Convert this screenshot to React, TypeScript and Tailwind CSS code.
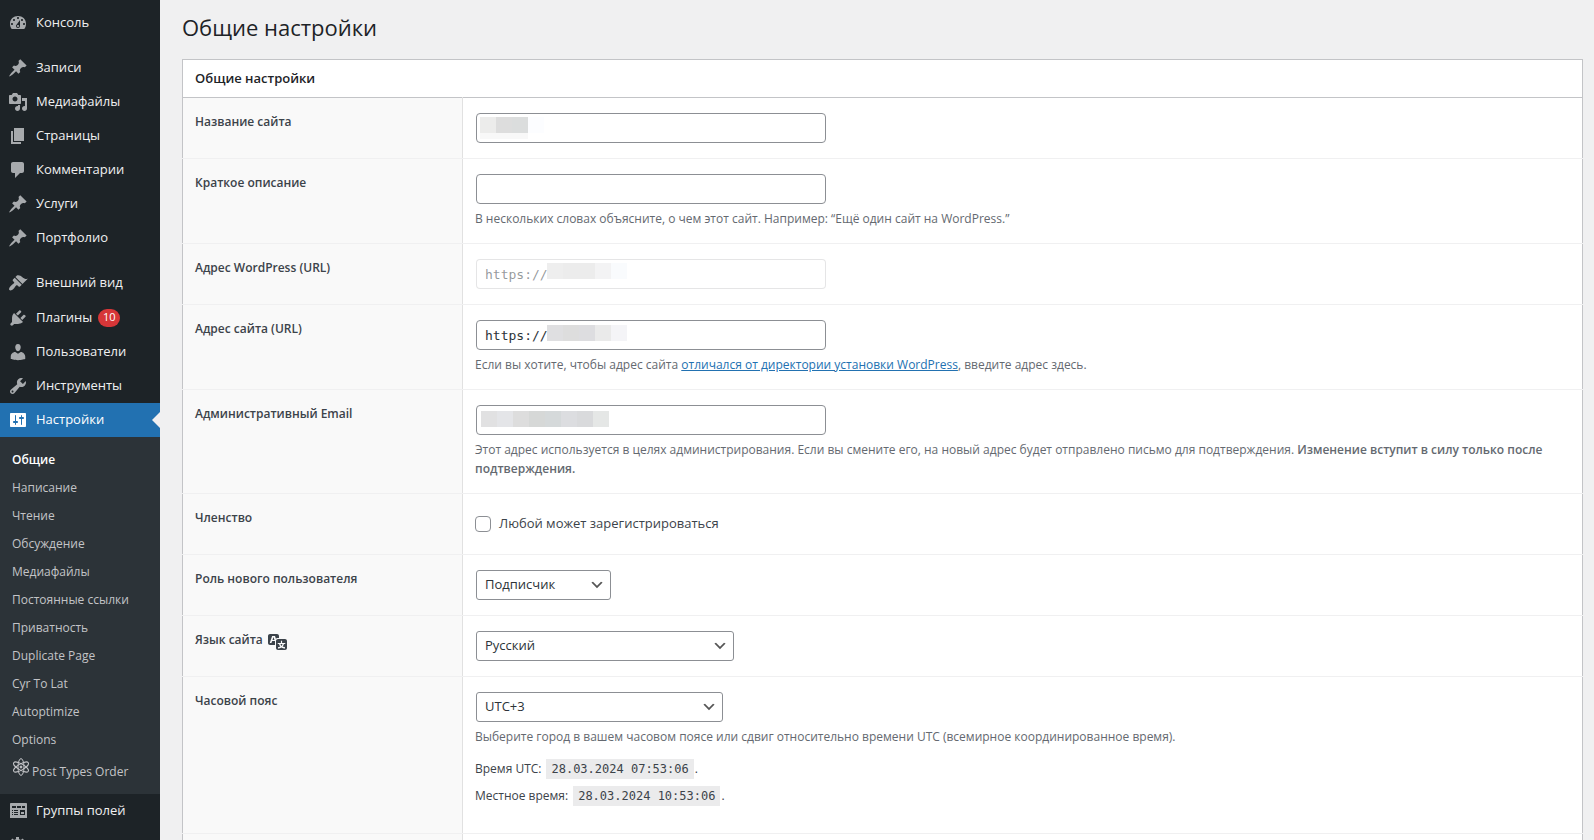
import { useState, type ReactNode } from 'react'

interface MenuItem {
  id: string
  label: string
  path: string
  badge?: number
}

interface SelectFieldProps {
  id: string
  options: string[]
  className: string
}

interface MosaicProps {
  colors: string[]
  className: string
}

const PIN =
  'M10.44 3.02l1.82-1.82 6.36 6.35-1.83 1.82c-1.05-.68-2.48-.57-3.41.36l-.75.75c-.92.93-1.04 2.35-.35 3.41l-1.83 1.82-2.41-2.41-2.8 2.79c-.42.42-3.38 2.71-3.8 2.29s1.86-3.39 2.28-3.81l2.79-2.79L4.1 9.36l1.83-1.82c1.05.69 2.48.57 3.4-.36l.75-.75c.93-.92 1.05-2.35.36-3.41z'
const DASHBOARD =
  'M3.76 16h12.48c1.11-1.41 1.76-3.18 1.76-5.11 0-4.97-3.58-7.89-8-7.89S2 5.92 2 10.89c0 1.93.65 3.7 1.76 5.11zM10 4c.55 0 1 .45 1 1s-.45 1-1 1-1-.45-1-1 .45-1 1-1zM6 6c.55 0 1 .45 1 1s-.45 1-1 1-1-.45-1-1 .45-1 1-1zm8 0c.55 0 1 .45 1 1s-.45 1-1 1-1-.45-1-1 .45-1 1-1zM12 7v6a2 2 0 0 1-4 0c0-.7.35-1.3.9-1.65zM4 10c.55 0 1 .45 1 1s-.45 1-1 1-1-.45-1-1 .45-1 1-1zm12 0c.55 0 1 .45 1 1s-.45 1-1 1-1-.45-1-1 .45-1 1-1zm-5 3c0-.55-.45-1-1-1s-1 .45-1 1 .45 1 1 1 1-.45 1-1z'
const MEDIA =
  'M13 11V4c0-.55-.45-1-1-1h-1.67L9 1H5L3.67 3H2c-.55 0-1 .45-1 1v7c0 .55.45 1 1 1h10c.55 0 1-.45 1-1zM7 4.5c1.38 0 2.5 1.12 2.5 2.5S8.38 9.5 7 9.5 4.5 8.38 4.5 7 5.62 4.5 7 4.5zM14 6h5v10.5c0 1.38-1.12 2.5-2.5 2.5S14 17.88 14 16.5s1.12-2.5 2.5-2.5c.17 0 .34.02.5.05V9h-3V6zm-4 8.05V13h2v3.5c0 1.38-1.12 2.5-2.5 2.5S7 17.88 7 16.5 8.12 14 9.5 14c.17 0 .34.02.5.05z'
const PAGES = 'M6 15V2h10v13H6zm-1 1h8v2H3V5h2v11z'
const COMMENTS =
  'M5 2h9c1.1 0 2 .9 2 2v7c0 1.1-.9 2-2 2h-2l-5 5v-5H5c-1.1 0-2-.9-2-2V4c0-1.1.9-2 2-2z'
const APPEARANCE =
  'M14.48 11.06L7.41 3.99l1.5-1.5c.5-.56 2.3-.47 3.51.32 1.21.8 1.43 1.28 2.91 2.1 1.18.64 2.45 1.26 4.45.85zm-.71.71L6.7 4.7 4.93 6.47c-.39.39-.39 1.02 0 1.41l1.06 1.06c.39.39.39 1.03 0 1.42-.6.6-1.43 1.11-2.21 1.69-.35.26-.7.53-1.01.84C1.43 14.23.4 16.08 1.4 17.07c.99 1 2.84-.03 4.18-1.36.31-.31.58-.66.85-1.02.57-.78 1.08-1.61 1.69-2.21.39-.39 1.02-.39 1.41 0l1.06 1.06c.39.39 1.02.39 1.41 0z'
const PLUGINS =
  'M13.11 4.36L9.87 7.6 8 5.73l3.24-3.24c.35-.34 1.05-.2 1.56.32.52.51.66 1.21.31 1.55zm-8 1.77l.91-1.12 9.01 9.01-1.19.84c-.71.71-2.63 1.16-3.82 1.16H6.14L4.9 17.26c-.59.59-1.54.59-2.12 0-.59-.58-.59-1.53 0-2.12l1.24-1.24v-3.88c0-1.13.4-3.19 1.09-3.89zm7.26 3.97l3.24-3.24c.34-.35 1.04-.21 1.55.31.52.51.66 1.21.31 1.55l-3.24 3.25z'
const USERS =
  'M10 9.25c-2.27 0-2.73-3.44-2.73-3.44C7 4.02 7.82 2 9.97 2c2.16 0 2.98 2.02 2.71 3.81 0 0-.41 3.44-2.68 3.44zm0 2.57L12.72 10c2.39 0 4.52 2.33 4.52 4.53v2.49s-3.65 1.13-7.24 1.13c-3.65 0-7.24-1.13-7.24-1.13v-2.49c0-2.25 1.94-4.48 4.47-4.48z'
const TOOLS =
  'M16.68 9.77c-1.34 1.34-3.3 1.67-4.95.99l-5.41 6.52c-.99.99-2.59.99-3.58 0s-.99-2.59 0-3.57l6.52-5.42c-.68-1.65-.35-3.61.99-4.95 1.28-1.28 3.12-1.62 4.72-1.06l-2.89 2.89 2.82 2.82 2.86-2.87c.53 1.58.18 3.39-1.08 4.65zM3.81 16.21c.4.39 1.04.39 1.43 0 .4-.4.4-1.04 0-1.43-.39-.4-1.03-.4-1.43 0-.39.39-.39 1.03 0 1.43z'
const SETTINGS =
  'M18 16V4c0-.55-.45-1-1-1H3c-.55 0-1 .45-1 1v12c0 .55.45 1 1 1h14c.55 0 1-.45 1-1zM8 11h1c.55 0 1 .45 1 1s-.45 1-1 1H8v1.5c0 .28-.22.5-.5.5s-.5-.22-.5-.5V13H6c-.55 0-1-.45-1-1s.45-1 1-1h1V5.5c0-.28.22-.5.5-.5s.5.22.5.5V11zm5-2h-1c-.55 0-1-.45-1-1s.45-1 1-1h1V5.5c0-.28.22-.5.5-.5s.5.22.5.5V7h1c.55 0 1 .45 1 1s-.45 1-1 1h-1v5.5c0 .28-.22.5-.5.5s-.5-.22-.5-.5V9z'
const FIELDS =
  'M19 17V3c0-.55-.45-1-1-1H3c-.55 0-1 .45-1 1v14h17zM4 5h4v2H4V5zm5 0h4v2H9V5zm5 0h3v2h-3V5zM4 9h1v1H4V9zm2 0h4v1H6V9zm-2 2h1v1H4v-1zm2 0h4v1H6v-1zm-2 2h1v1H4v-1zm2 0h4v1H6v-1zm6-4h5v5h-5V9zm1 2v2h3v-2h-3z'
const GEAR =
  'M18 12h-2.18c-.17.7-.44 1.35-.81 1.93l1.54 1.54-2.1 2.1-1.54-1.54c-.58.36-1.23.63-1.91.79V19H8v-2.18c-.68-.16-1.33-.43-1.91-.79l-1.54 1.54-2.12-2.12 1.54-1.54c-.36-.58-.63-1.23-.79-1.91H1V9.03h2.17c.16-.7.44-1.35.8-1.94L2.43 5.55l2.1-2.1 1.54 1.54c.58-.37 1.24-.64 1.93-.81V2h3v2.18c.68.16 1.33.43 1.91.79l1.54-1.54 2.12 2.12-1.54 1.54c.36.59.64 1.24.8 1.94H18V12zm-8.5 1.5c1.66 0 3-1.34 3-3s-1.34-3-3-3-3 1.34-3 3 1.34 3 3 3z'
const TRANSLATION =
  'M11 7H9.49c-.63 0-1.25.3-1.59.7L7 5H4.13l-2.39 7h1.69l.74-2H7v4H2c-1.1 0-2-.9-2-2V5c0-1.1.9-2 2-2h7c1.1 0 2 .9 2 2v2zM6.51 9H4.49l1-2.93zM10 8h7c1.1 0 2 .9 2 2v7c0 1.1-.9 2-2 2h-7c-1.1 0-2-.9-2-2v-7c0-1.1.9-2 2-2zm7.25 5v-1.08h-3.17V9.75h-1.16v2.17H9.75V13h1.28c.11.85.56 1.85 1.28 2.62-.87.36-1.89.62-2.31.62-.01.02.22.97.2 1.46.84 0 2.21-.5 3.28-1.15 1.09.65 2.48 1.15 3.34 1.15-.02-.49.2-1.44.2-1.46-.43 0-1.49-.27-2.38-.63.7-.77 1.14-1.77 1.25-2.61h1.36zm-3.81 1.93c-.5-.46-.85-1.13-1.01-1.93h2.09c-.17.8-.51 1.47-1 1.93l-.04.03s-.03-.02-.04-.03z'

const menuGroups: MenuItem[][] = [
  [{ id: 'dashboard', label: 'Консоль', path: DASHBOARD }],
  [
    { id: 'posts', label: 'Записи', path: PIN },
    { id: 'media', label: 'Медиафайлы', path: MEDIA },
    { id: 'pages', label: 'Страницы', path: PAGES },
    { id: 'comments', label: 'Комментарии', path: COMMENTS },
    { id: 'services', label: 'Услуги', path: PIN },
    { id: 'portfolio', label: 'Портфолио', path: PIN },
  ],
  [
    { id: 'appearance', label: 'Внешний вид', path: APPEARANCE },
    { id: 'plugins', label: 'Плагины', path: PLUGINS, badge: 10 },
    { id: 'users', label: 'Пользователи', path: USERS },
    { id: 'tools', label: 'Инструменты', path: TOOLS },
  ],
]

const submenu = [
  'Общие',
  'Написание',
  'Чтение',
  'Обсуждение',
  'Медиафайлы',
  'Постоянные ссылки',
  'Приватность',
  'Duplicate Page',
  'Cyr To Lat',
  'Autoptimize',
  'Options',
]

const inputClass =
  'mx-px block h-[30px] w-full max-w-[350px] rounded-[4px] border border-[#8c8f94] bg-white px-2 text-[13px] text-[#2c3338]'
const monoClass = "font-['DejaVu_Sans_Mono',monospace]"

function Icon({ path }: { path: string }) {
  return (
    <svg viewBox="0 0 20 20" fill="currentColor" aria-hidden="true" className="h-5 w-5">
      <path fillRule="evenodd" d={path} />
    </svg>
  )
}

function AtomIcon() {
  return (
    <svg viewBox="0 0 18 18" fill="none" stroke="currentColor" aria-hidden="true" className="h-[18px] w-[18px]">
      <ellipse cx="9" cy="9" rx="3" ry="8.4" />
      <ellipse cx="9" cy="9" rx="3" ry="8.4" transform="rotate(60 9 9)" />
      <ellipse cx="9" cy="9" rx="3" ry="8.4" transform="rotate(120 9 9)" />
      <circle cx="9" cy="9" r="1" fill="currentColor" />
    </svg>
  )
}

function MenuLink({ item }: { item: MenuItem }) {
  return (
    <li>
      <a
        href={`#${item.id}`}
        className={`flex items-center pl-2 text-[13px] text-[#f0f0f1] hover:text-[#72aee6] ${item.badge ? 'h-[35px]' : 'h-[34px]'}`}
      >
        <span className="text-[#a7aaad]">
          <Icon path={item.path} />
        </span>
        <span className="ml-2">{item.label}</span>
        {item.badge && (
          <span className="ml-[6px] flex h-[18px] min-w-[22px] items-center justify-center rounded-full bg-[#d63638] px-1 text-[11px] text-white">
            {item.badge}
          </span>
        )}
      </a>
    </li>
  )
}

function Sidebar() {
  return (
    <nav className="w-40 shrink-0 bg-[#1d2327] pt-[6px]">
      {menuGroups.map((group) => (
        <ul key={group[0].id} className="mb-[11px] nth-[3]:mb-0">
          {group.map((item) => (
            <MenuLink key={item.id} item={item} />
          ))}
        </ul>
      ))}
      <a href="#settings" className="relative flex h-[34px] items-center bg-[#2271b1] pl-2 text-[13px] text-white">
        <Icon path={SETTINGS} />
        <span className="ml-2">Настройки</span>
        <span className="absolute right-0 top-[9px] border-y-8 border-r-8 border-y-transparent border-r-[#f0f0f1]" />
      </a>
      <div className="bg-[#2c3338] pb-[7px] pt-[9px] text-xs text-[#c3c4c7]">
        {submenu.map((label, index) => (
          <a
            key={label}
            href={`#options-${index}`}
            className={`flex h-7 items-center px-3 hover:text-[#72aee6] ${index === 0 ? 'font-semibold text-white' : ''}`}
          >
            {label}
          </a>
        ))}
        <a href="#post-types-order" className="flex h-[33px] items-center px-3 hover:text-[#72aee6]">
          <span className="self-start pt-1">
            <AtomIcon />
          </span>
          <span className="ml-[2px] pt-[2px]">Post Types Order</span>
        </a>
      </div>
      <ul>
        <MenuLink item={{ id: 'fields', label: 'Группы полей', path: FIELDS }} />
        <li>
          <a href="#more" className="flex h-[34px] items-center pl-2 text-[#a7aaad]">
            <Icon path={GEAR} />
          </a>
        </li>
      </ul>
    </nav>
  )
}

function Row({ label, htmlFor, children }: { label: ReactNode; htmlFor?: string; children?: ReactNode }) {
  return (
    <tr>
      <th
        scope="row"
        className="w-1/5 border-b border-l border-r border-b-[#f0f0f1] border-l-[#c3c4c7] border-r-[#e1e1e1] bg-[#f9f9f9] px-3 py-[15px] text-left align-top text-xs/[18px] font-semibold text-[#3c434a]"
      >
        <label htmlFor={htmlFor}>{label}</label>
      </th>
      <td className="border-b border-r border-b-[#f0f0f1] border-r-[#c3c4c7] px-3 py-[15px] align-top">{children}</td>
    </tr>
  )
}

function Description({ children }: { children: ReactNode }) {
  return <p className="mt-[5px] text-xs/[19px] text-[#646970]">{children}</p>
}

// Pixelated strip that covers private values
function Mosaic({ colors, className }: MosaicProps) {
  return (
    <span aria-hidden="true" className={`pointer-events-none absolute flex ${className}`}>
      {colors.map((color, index) => (
        <span key={index} className="h-4 w-4" style={{ backgroundColor: color }} />
      ))}
    </span>
  )
}

function SelectField({ id, options, className }: SelectFieldProps) {
  return (
    <div className={`relative mx-px ${className}`}>
      <select
        id={id}
        className="block h-[30px] w-full appearance-none rounded-[3px] border border-[#8c8f94] bg-white pl-2 pr-6 text-[13px] text-[#2c3338]"
      >
        {options.map((option) => (
          <option key={option}>{option}</option>
        ))}
      </select>
      <svg
        viewBox="0 0 20 20"
        fill="#555"
        aria-hidden="true"
        className="pointer-events-none absolute right-[6px] top-[7px] h-4 w-4"
      >
        <path d="M5 6l5 5 5-5 2 1-7 7-7-7 2-1z" />
      </svg>
    </div>
  )
}

function TimeLine({ label, value }: { label: string; value: string }) {
  return (
    <p className="flex h-5 items-center text-xs text-[#3c434a]">
      {label}
      <code className={`ml-[5px] mr-px bg-[#ebebec] px-[5px] text-xs/5 ${monoClass}`}>{value}</code>.
    </p>
  )
}

export default function App() {
  const [siteName, setSiteName] = useState('')
  const [tagline, setTagline] = useState('')
  const [homeUrl, setHomeUrl] = useState('https://')
  const [email, setEmail] = useState('')
  const [anyoneCanRegister, setAnyoneCanRegister] = useState(false)

  return (
    <div className="flex h-screen overflow-hidden bg-[#f0f0f1] font-['Open_Sans','Noto_Sans',sans-serif] text-[#3c434a]">
      <Sidebar />
      <main className="min-w-0 flex-1 pl-[22px] pr-[11px]">
        <h1 className="flex h-[59px] items-center pb-1 text-[22px] text-[#1d2327]">Общие настройки</h1>
        <form>
          <h2 className="flex h-[38px] items-center border-x border-t border-[#c3c4c7] bg-white px-3 text-[13px] font-semibold text-[#1d2327]">
            Общие настройки
          </h2>
          <table className="w-full border-collapse border-t border-[#c3c4c7] bg-white">
            <tbody>
              <Row label="Название сайта" htmlFor="blogname">
                <div className="relative">
                  <input
                    id="blogname"
                    className={inputClass}
                    value={siteName}
                    onChange={(e) => setSiteName(e.target.value)}
                  />
                  <Mosaic colors={['#ececeb', '#dddddd', '#dbdddd', '#fcfdff']} className="left-[5px] top-1" />
                  <span className="pointer-events-none absolute left-[5px] top-5 h-[6px] w-12 bg-[#f8f8f8]" />
                </div>
              </Row>
              <Row label="Краткое описание" htmlFor="blogdescription">
                <input
                  id="blogdescription"
                  className={inputClass}
                  value={tagline}
                  onChange={(e) => setTagline(e.target.value)}
                />
                <Description>
                  В нескольких словах объясните, о чем этот сайт. Например: “Ещё один сайт на WordPress.”
                </Description>
              </Row>
              <Row label="Адрес WordPress (URL)" htmlFor="siteurl">
                <div className="relative">
                  <input
                    id="siteurl"
                    type="url"
                    disabled
                    defaultValue="https://"
                    className={`mx-px block h-[30px] w-full max-w-[350px] rounded-[4px] border border-[#dcdcde]/75 bg-white/50 px-2 text-[13px] text-[#2c3338]/50 ${monoClass}`}
                  />
                  <Mosaic colors={['#eeeeee', '#ececec', '#ececec', '#f3f3f4', '#f9fbfd']} className="left-[72px] top-1" />
                </div>
              </Row>
              <Row label="Адрес сайта (URL)" htmlFor="home">
                <div className="relative">
                  <input
                    id="home"
                    type="url"
                    className={`${inputClass} ${monoClass}`}
                    value={homeUrl}
                    onChange={(e) => setHomeUrl(e.target.value)}
                  />
                  <Mosaic colors={['#dfdfe1', '#dddddd', '#dddde0', '#eaeaea', '#f4f4f7']} className="left-[72px] top-[5px]" />
                </div>
                <Description>
                  Если вы хотите, чтобы адрес сайта{' '}
                  <a href="#directory" className="text-[#2271b1] underline">
                    отличался от директории установки WordPress
                  </a>
                  , введите адрес здесь.
                </Description>
              </Row>
              <Row label="Административный Email" htmlFor="new_admin_email">
                <div className="relative">
                  <input
                    id="new_admin_email"
                    type="email"
                    className={inputClass}
                    value={email}
                    onChange={(e) => setEmail(e.target.value)}
                  />
                  <Mosaic
                    colors={['#e1e1e2', '#e4e5e8', '#dddddd', '#d6d8d7', '#d5d9da', '#dcdde0', '#d9dadc', '#e5e7e6']}
                    className="left-[6px] top-[6px]"
                  />
                </div>
                <Description>
                  Этот адрес используется в целях администрирования. Если вы смените его, на новый адрес будет
                  отправлено письмо для подтверждения.{' '}
                  <strong className="font-semibold">Изменение вступит в силу только после подтверждения.</strong>
                </Description>
              </Row>
              <Row label="Членство" htmlFor="users_can_register">
                <label className="flex h-[30px] items-center gap-2 text-[13px]">
                  <input
                    id="users_can_register"
                    type="checkbox"
                    checked={anyoneCanRegister}
                    onChange={(e) => setAnyoneCanRegister(e.target.checked)}
                    className="h-4 w-4 appearance-none rounded-[4px] border border-[#8c8f94] bg-white checked:bg-[#2271b1]"
                  />
                  Любой может зарегистрироваться
                </label>
              </Row>
              <Row label="Роль нового пользователя" htmlFor="default_role">
                <SelectField id="default_role" options={['Подписчик']} className="w-[135px]" />
              </Row>
              <Row
                label={
                  <span className="flex h-[18px] items-start gap-[5px]">
                    Язык сайта
                    <Icon path={TRANSLATION} />
                  </span>
                }
                htmlFor="WPLANG"
              >
                <SelectField id="WPLANG" options={['Русский']} className="w-[258px]" />
              </Row>
              <Row label="Часовой пояс" htmlFor="timezone_string">
                <SelectField id="timezone_string" options={['UTC+3']} className="w-[247px]" />
                <Description>
                  Выберите город в вашем часовом поясе или сдвиг относительно времени UTC (всемирное
                  координированное время).
                </Description>
                <div className="flex flex-col gap-[7px] pb-3 pt-[13px]">
                  <TimeLine label="Время UTC:" value="28.03.2024 07:53:06" />
                  <TimeLine label="Местное время:" value="28.03.2024 10:53:06" />
                </div>
              </Row>
              <Row label="" />
            </tbody>
          </table>
        </form>
      </main>
    </div>
  )
}
